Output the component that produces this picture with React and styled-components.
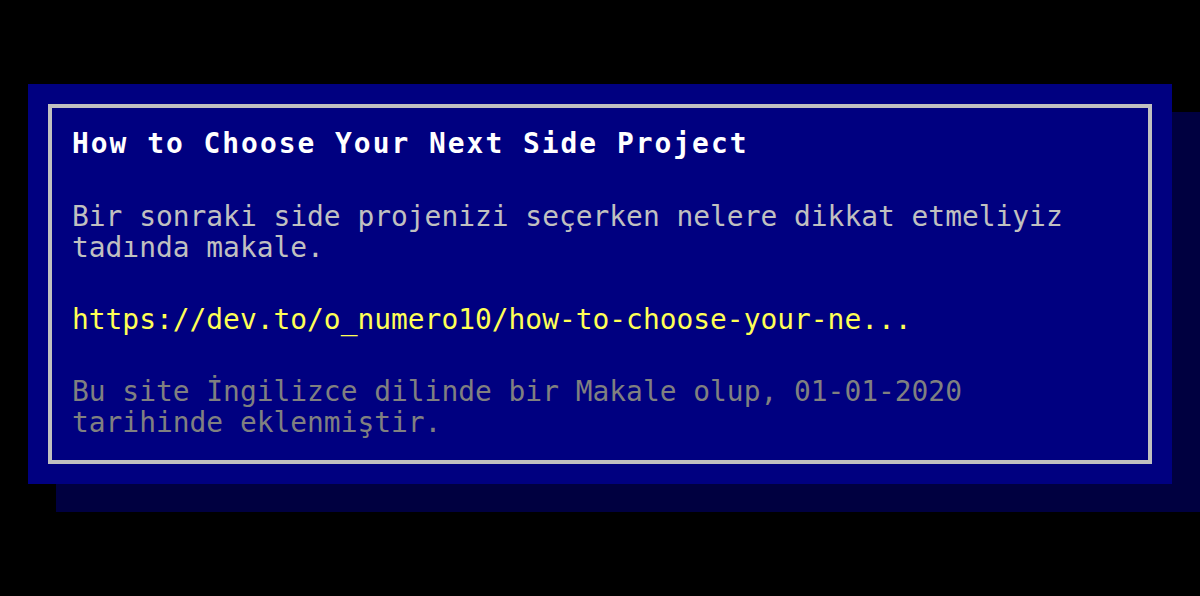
import React from "react";
import styled, { createGlobalStyle } from "styled-components";

const Global = createGlobalStyle`
  html, body { margin: 0; padding: 0; background: #000; }
  body { width: 1200px; height: 596px; overflow: hidden; font-family: "DejaVu Sans Mono", "Liberation Mono", monospace; }
`;

const Page = styled.div`
  padding: 84px 0 0 28px;
`;

const Window = styled.div`
  width: 1144px;
  height: 400px;
  box-sizing: border-box;
  background: #000080;
  padding: 20px;
  box-shadow: 28px 28px 0 #000040;
`;

const Frame = styled.div`
  height: 100%;
  box-sizing: border-box;
  border: 4px solid #c0c0c0;
  padding: 20px 20px;
  display: flex;
  flex-direction: column;
  gap: 41px;
`;

const Title = styled.h2`
  margin: 0 0 1px;
  font-size: 27.9px;
  line-height: 31px;
  font-weight: bold;
  color: #fff;
  letter-spacing: 2px;
`;

const Text = styled.p`
  margin: 0;
  font-size: 27.9px;
  line-height: 31px;
  color: ${(p) => p.$color};
`;

export default function App() {
  return (
    <>
      <Global />
      <Page>
        <Window>
          <Frame>
            <Title>How to Choose Your Next Side Project</Title>
            <Text $color="#c0c0c0">
              Bir sonraki side projenizi seçerken nelere dikkat etmeliyiz tadında makale.
            </Text>
            <Text $color="#ffff55">https://dev.to/o_numero10/how-to-choose-your-ne...</Text>
            <Text $color="#808080">
              Bu site İngilizce dilinde bir Makale olup, 01-01-2020 tarihinde eklenmiştir.
            </Text>
          </Frame>
        </Window>
      </Page>
    </>
  );
}
